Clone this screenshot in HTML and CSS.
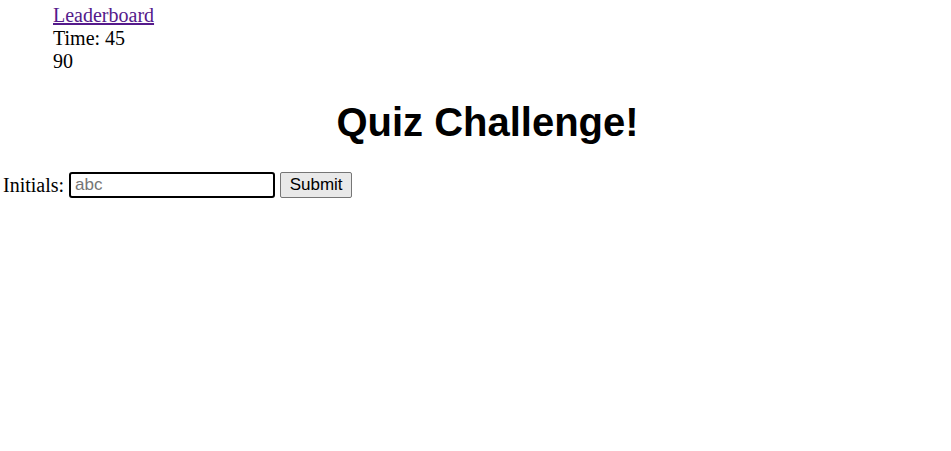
FILE: index.html
```html
<!DOCTYPE html>
<html>
<head>
<meta charset="utf-8">
<link rel="stylesheet" href="styles.css">
</head>
<body>
<header class="top">
  <a class="lb-link" href="#">Leaderboard</a>
  <div class="timer">Time: 45</div>
  <div class="score">90</div>
</header>
<h1 class="title">Quiz Challenge!</h1>
<form class="entry">
  <label class="entry-label" for="initials">Initials:</label>
  <input class="entry-input" id="initials" type="text" placeholder="abc" autofocus>
  <button class="entry-btn" type="button">Submit</button>
</form>
</body>
</html>
```
FILE: styles.css
```css
html, body {
  margin: 0;
  padding: 0;
  background: #fff;
}
body {
  font-family: "Liberation Serif", "Times New Roman", serif;
  font-size: 20px;
  color: #000;
}
.top {
  padding: 4px 0 0 53px;
  line-height: 23px;
}
.lb-link {
  color: #551a8b;
  text-decoration: underline;
}
.title {
  font-family: "Liberation Sans", Arial, sans-serif;
  font-weight: bold;
  font-size: 40px;
  line-height: 46px;
  text-align: center;
  margin: 26px 0 27px 0;
  padding-left: 24px;
}
.entry {
  display: flex;
  align-items: center;
  padding-left: 3px;
}
.entry-label {
  margin-right: 5px;
}
.entry-input {
  box-sizing: border-box;
  width: 206px;
  height: 26px;
  font-family: "Liberation Sans", Arial, sans-serif;
  font-size: 17px;
  padding: 1px 4px;
  border: 2px solid #000;
  border-radius: 3px;
  outline: none;
  color: #000;
}
.entry-input::placeholder {
  color: #757575;
}
.entry-btn {
  box-sizing: border-box;
  margin-left: 5px;
  width: 72px;
  height: 26px;
  font-family: "Liberation Sans", Arial, sans-serif;
  font-size: 17px;
  background: #e9e9e9;
  border: 1px solid #767676;
  border-radius: 2px;
  color: #000;
  padding: 0 6px;
}
```
